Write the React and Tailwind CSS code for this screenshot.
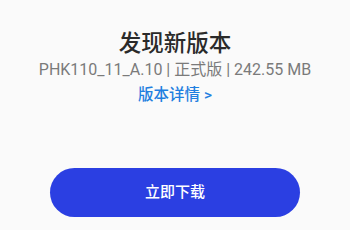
import React from 'react';

const App = () => {
  return (
    <div
      className="w-[350px] h-[230px] bg-[#fafafa] flex flex-col items-center overflow-hidden"
      style={{ fontFamily: '"Roboto", "Noto Sans CJK SC", sans-serif' }}
    >
      {/* Title + version info */}
      <h1 className="mt-[29px] text-[22.5px] leading-[28px] font-medium text-[#2a2a2a]">发现新版本</h1>
      <p className="mt-[3px] text-[16px] leading-[20px] text-[#7a7a7a]">
        PHK110_11_A.10 | 正式版 | 242.55 MB
      </p>
      <button className="mt-[5px] text-[15.5px] leading-[20px] font-medium text-[#1f7fe0]">
        版本详情 &gt;
      </button>

      {/* Download button */}
      <button className="mt-[63px] w-[250px] h-[49px] rounded-full bg-[#2b3fe2] text-white text-[15px] font-medium">
        立即下载
      </button>
    </div>
  );
};

export default App;
